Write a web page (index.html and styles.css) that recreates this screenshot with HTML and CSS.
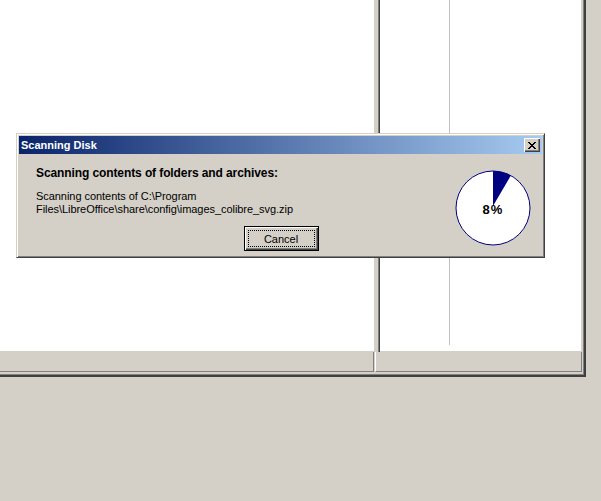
FILE: index.html
```html
<!DOCTYPE html>
<html lang="en">
<head>
    <meta charset="UTF-8">
    <title>Scanning Disk</title>
    <link rel="stylesheet" href="styles.css">
</head>
<body>
    <div class="screen">
        <div class="window">
            <div class="panes">
                <div class="pane-left"></div>
                <div class="splitter"></div>
                <div class="pane-right">
                    <div class="col-line"></div>
                </div>
            </div>
            <div class="statusbar">
                <div class="status-main"></div>
                <div class="status-side"></div>
            </div>
        </div>

        <div class="dialog">
            <div class="titlebar">
                <span class="title">Scanning Disk</span>
                <span class="close-btn">
                    <svg width="8" height="7" viewBox="0 0 8 7" shape-rendering="crispEdges">
                        <path fill="#000" d="M0 0h2v1H0z M6 0h2v1H6z M1 1h2v1H1z M5 1h2v1H5z M2 2h4v1H2z M3 3h2v1H3z M2 4h4v1H2z M1 5h2v1H1z M5 5h2v1H5z M0 6h2v1H0z M6 6h2v1H6z"/>
                    </svg>
                </span>
            </div>
            <div class="dialog-body">
                <div class="text">
                    <div class="heading">Scanning contents of folders and archives:</div>
                    <p class="path">Scanning contents of C:\Program<br>Files\LibreOffice\share\config\images_colibre_svg.zip</p>
                </div>
                <div class="pie">
                    <svg width="76" height="76" viewBox="0 0 76 76">
                        <circle cx="38" cy="38" r="37" fill="#fff" stroke="#000080" stroke-width="1"/>
                        <path d="M38 36 L38 1 A37 37 0 0 1 55.8 5.6 Z" fill="#000080"/>
                    </svg>
                    <span class="pie-label">8%</span>
                </div>
                <button class="btn"><span class="btn-focus">Cancel</span></button>
            </div>
        </div>
    </div>
</body>
</html>
```

FILE: styles.css
```css
body {
    margin: 0;
    background-color: #d4d0c8;
    font-family: "Liberation Sans", Arial, sans-serif;
    font-size: 11px;
}
.screen {
    position: relative;
    width: 601px;
    height: 501px;
    overflow: hidden;
}

/* main window behind the dialog */
.window {
    width: 586px;
    height: 377px;
    box-sizing: border-box;
    padding: 0 4px 5px 0;
    display: flex;
    flex-direction: column;
    box-shadow: inset -1px -1px 0 #404040, inset -2px -2px 0 #404040, inset -3px -3px 0 #808080;
}
.panes {
    height: 352px;
    display: flex;
}
.pane-left {
    width: 375px;
    background: #fff;
    box-shadow: inset -1px -1px 0 #d4d0c8, inset -2px -2px 0 #fff;
}
.splitter {
    width: 3px;
}
.pane-right {
    flex: 1;
    background: #fff;
    border-left: 1px solid #808080;
    box-shadow: inset 1px 0 0 #404040, inset -1px -1px 0 #d4d0c8, inset -2px -2px 0 #fff;
}
.col-line {
    margin-left: 70px;
    width: 1px;
    height: 345px;
    background: #c0c0c0;
}
.statusbar {
    height: 20px;
    display: flex;
    gap: 1px;
}
.status-main {
    width: 373px;
    border-right: 1px solid #808080;
    border-bottom: 1px solid #808080;
}
.status-side {
    flex: 1;
    border-left: 1px solid #fff;
    border-right: 1px solid #808080;
    border-bottom: 1px solid #808080;
}

/* dialog */
.dialog {
    position: absolute;
    left: 16px;
    top: 133px;
    width: 529px;
    height: 125px;
    box-sizing: border-box;
    padding: 2px;
    background: #d4d0c8;
    border: 1px solid;
    border-color: #d4d0c8 #404040 #404040 #d4d0c8;
    box-shadow: inset 1px 1px 0 #fff, inset -1px -1px 0 #808080;
}
.titlebar {
    height: 18px;
    padding: 0 2px;
    display: flex;
    align-items: center;
    justify-content: space-between;
    background: linear-gradient(to right, #0a246a, #a6caf0);
    color: #fff;
    font-weight: bold;
}
.close-btn {
    width: 16px;
    height: 14px;
    box-sizing: border-box;
    display: flex;
    align-items: center;
    justify-content: center;
    padding-right: 1px;
    background: #d4d0c8;
    box-shadow: inset 1px 1px 0 #fff, inset -1px -1px 0 #404040, inset -2px -2px 0 #808080;
}
.dialog-body {
    display: grid;
    grid-template-columns: 1fr auto;
    padding: 13px 11px 0 17px;
    color: #000;
}
.text {
    grid-column: 1;
    grid-row: 1;
}
.heading {
    font-size: 12px;
    font-weight: bold;
    line-height: 13px;
    letter-spacing: -0.1px;
}
.path {
    margin: 10px 0 0;
    line-height: 13px;
    letter-spacing: -0.05px;
}
.pie {
    grid-column: 2;
    grid-row: 1 / 3;
    position: relative;
    width: 76px;
    height: 76px;
    margin-top: 3px;
}
.pie svg {
    display: block;
}
.pie-label {
    position: absolute;
    top: 0;
    left: 0;
    right: 0;
    bottom: 0;
    display: flex;
    align-items: center;
    justify-content: center;
    padding-top: 3px;
    font-size: 13px;
    font-weight: bold;
    letter-spacing: 1px;
}
.btn {
    grid-column: 1 / 3;
    grid-row: 2;
    justify-self: center;
    margin: 10px 5px 0 0;
    width: 75px;
    height: 25px;
    box-sizing: border-box;
    padding: 0;
    display: flex;
    border: 1px solid #000;
    background: #d4d0c8;
    box-shadow: inset 1px 1px 0 #fff, inset -1px -1px 0 #404040, inset -2px -2px 0 #808080;
    font-family: "Liberation Sans", Arial, sans-serif;
    font-size: 11px;
    color: #000;
}
.btn-focus {
    flex: 1;
    margin: 3px;
    border: 1px dotted #000;
    display: flex;
    align-items: center;
    justify-content: center;
}
```
